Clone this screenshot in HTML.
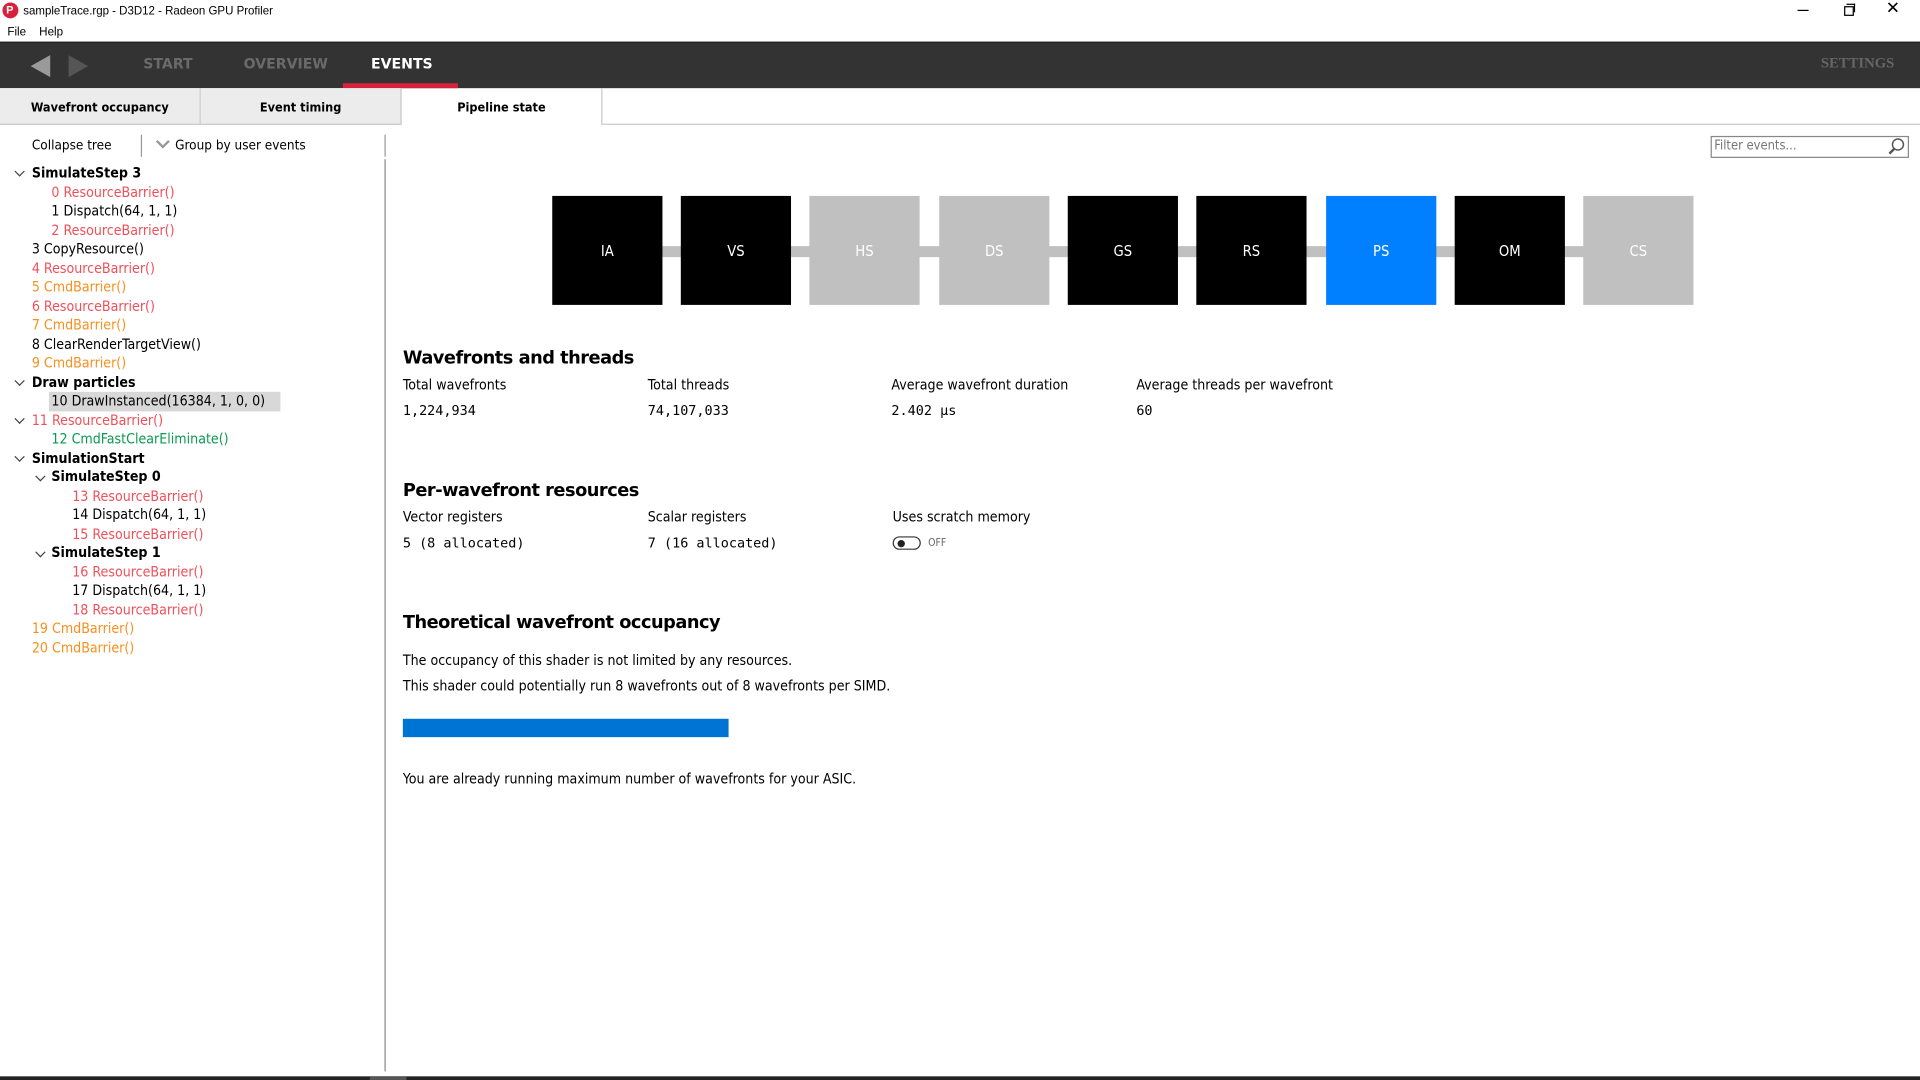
<!DOCTYPE html>
<html><head><meta charset="utf-8">
<style>
html,body{margin:0;padding:0;width:1920px;height:1080px;overflow:hidden;background:#fff}
#w{position:absolute;left:0;top:0;width:1568px;height:882px;transform:scale(1.22449);transform-origin:0 0;font-family:"DejaVu Sans Condensed","Liberation Sans",sans-serif;color:#000}
.a{position:absolute;white-space:nowrap}
.t{font-size:11.5px;line-height:15.5px}
.b{font-weight:bold}
.red{color:#f0505a}.org{color:#f7901e}.grn{color:#0a9a52}
.mono{font-family:"DejaVu Sans Mono","Liberation Mono",monospace;font-size:11px}
.box{position:absolute;top:160px;width:90px;height:89px;color:#fff;font-size:12px;display:flex;align-items:center;justify-content:center}
.h{font-family:"DejaVu Sans","Liberation Sans",sans-serif;font-weight:bold;font-size:14.5px;letter-spacing:-0.4px}
.chev{position:absolute;width:5px;height:5px;border-right:1.5px solid #444;border-bottom:1.5px solid #444;transform:rotate(45deg)}
#tr{position:absolute;left:0;top:1px;width:320px;height:600px}
</style></head><body><div id="w">
<div class="a" style="left:2px;top:2px;width:13px;height:13px;border-radius:50%;background:#d8213a"></div>
<div class="a" style="left:5px;top:3px;color:#fff;font-size:9px;font-weight:bold;font-family:'Liberation Sans',sans-serif">P</div>
<div class="a" style="left:19px;top:3px;font-size:9.4px;font-family:'Liberation Sans',sans-serif">sampleTrace.rgp - D3D12 - Radeon GPU Profiler</div>
<div class="a" style="left:6px;top:21px;font-size:9.5px;font-family:'Liberation Sans',sans-serif">File</div>
<div class="a" style="left:32px;top:21px;font-size:9.5px;font-family:'Liberation Sans',sans-serif">Help</div>
<div class="a" style="left:1468px;top:8px;width:9px;height:1px;background:#000"></div>
<div class="a" style="left:1506px;top:5px;width:6px;height:6px;border:1px solid #000"></div>
<div class="a" style="left:1508px;top:3px;width:6px;height:6px;border-top:1px solid #000;border-right:1px solid #000"></div>
<div class="a" style="left:1540px;top:-2px;font-size:14px;font-family:'Liberation Sans',sans-serif">✕</div>
<div class="a" style="left:0;top:34px;width:1568px;height:1px;background:#000"></div>
<div class="a" style="left:0;top:35px;width:1568px;height:37px;background:#333"></div>
<svg class="a" style="left:22px;top:44px" width="52" height="20"><polygon points="19,1 19,19 3,10" fill="#9a9a9a"/><polygon points="34,1 34,19 50,10" fill="#555"/></svg>
<div class="a b" style="left:117px;top:45px;font-size:11.5px;color:#6a6a6a;font-family:'DejaVu Sans',sans-serif">START</div>
<div class="a b" style="left:199px;top:45px;font-size:11.5px;color:#6a6a6a;font-family:'DejaVu Sans',sans-serif">OVERVIEW</div>
<div class="a b" style="left:303px;top:45px;font-size:11.5px;color:#fff;font-family:'DejaVu Sans',sans-serif">EVENTS</div>
<div class="a" style="left:280px;top:68px;width:94px;height:4px;background:#d8213a"></div>
<div class="a b" style="left:1487px;top:44px;font-size:12px;color:#666;font-family:'Liberation Serif',serif">SETTINGS</div>
<div class="a" style="left:0;top:72px;width:163px;height:29px;background:#ececec;border-right:1px solid #c8c8c8;border-bottom:1px solid #c8c8c8"></div>
<div class="a" style="left:164px;top:72px;width:163px;height:29px;background:#ececec;border-right:1px solid #c8c8c8;border-bottom:1px solid #c8c8c8"></div>
<div class="a" style="left:491px;top:72px;width:1px;height:30px;background:#c8c8c8"></div>
<div class="a" style="left:492px;top:101px;width:1076px;height:1px;background:#c8c8c8"></div>
<div class="a b" style="left:0;width:163px;text-align:center;top:82px;font-size:10.3px">Wavefront occupancy</div>
<div class="a b" style="left:164px;width:163px;text-align:center;top:82px;font-size:10.3px">Event timing</div>
<div class="a b" style="left:328px;width:163px;text-align:center;top:82px;font-size:10.3px">Pipeline state</div>
<div class="a" style="left:26px;top:112px;font-size:11px">Collapse tree</div>
<div class="a" style="left:115px;top:110px;width:1px;height:18px;background:#999"></div>
<svg class="a" style="left:127px;top:114px" width="12" height="8"><polyline points="1,1 6,6 11,1" fill="none" stroke="#999" stroke-width="2"/></svg>
<div class="a" style="left:143px;top:112px;font-size:11px">Group by user events</div>
<div class="a" style="left:314px;top:110px;width:1px;height:18px;background:#999"></div>
<div class="a" style="left:314px;top:130px;width:1px;height:745px;background:#888"></div>
<div id="tr">
<div class="a" style="left:40px;top:319px;width:189px;height:16px;background:#d8d8d8"></div>
<div class="chev" style="left:13px;top:136px"></div>
<div class="chev" style="left:13px;top:307px"></div>
<div class="chev" style="left:13px;top:338px"></div>
<div class="chev" style="left:13px;top:369px"></div>
<div class="chev" style="left:30px;top:385px"></div>
<div class="chev" style="left:30px;top:447px"></div>
<div class="a t b" style="left:26px;top:133px">SimulateStep 3</div>
<div class="a t red" style="left:42px;top:149px">0 ResourceBarrier()</div>
<div class="a t" style="left:42px;top:164px">1 Dispatch(64, 1, 1)</div>
<div class="a t red" style="left:42px;top:180px">2 ResourceBarrier()</div>
<div class="a t" style="left:26px;top:195px">3 CopyResource()</div>
<div class="a t red" style="left:26px;top:211px">4 ResourceBarrier()</div>
<div class="a t org" style="left:26px;top:226px">5 CmdBarrier()</div>
<div class="a t red" style="left:26px;top:242px">6 ResourceBarrier()</div>
<div class="a t org" style="left:26px;top:257px">7 CmdBarrier()</div>
<div class="a t" style="left:26px;top:273px">8 ClearRenderTargetView()</div>
<div class="a t org" style="left:26px;top:288px">9 CmdBarrier()</div>
<div class="a t b" style="left:26px;top:304px">Draw particles</div>
<div class="a t" style="left:42px;top:319px">10 DrawInstanced(16384, 1, 0, 0)</div>
<div class="a t red" style="left:26px;top:335px">11 ResourceBarrier()</div>
<div class="a t grn" style="left:42px;top:350px">12 CmdFastClearEliminate()</div>
<div class="a t b" style="left:26px;top:366px">SimulationStart</div>
<div class="a t b" style="left:42px;top:381px">SimulateStep 0</div>
<div class="a t red" style="left:59px;top:397px">13 ResourceBarrier()</div>
<div class="a t" style="left:59px;top:412px">14 Dispatch(64, 1, 1)</div>
<div class="a t red" style="left:59px;top:428px">15 ResourceBarrier()</div>
<div class="a t b" style="left:42px;top:443px">SimulateStep 1</div>
<div class="a t red" style="left:59px;top:459px">16 ResourceBarrier()</div>
<div class="a t" style="left:59px;top:474px">17 Dispatch(64, 1, 1)</div>
<div class="a t red" style="left:59px;top:490px">18 ResourceBarrier()</div>
<div class="a t org" style="left:26px;top:505px">19 CmdBarrier()</div>
<div class="a t org" style="left:26px;top:521px">20 CmdBarrier()</div>
</div>
<div class="a" style="left:1397px;top:111px;width:160px;height:16px;border:1px solid #888"></div>
<div class="a" style="left:1400px;top:113px;font-size:10.5px;color:#777">Filter events...</div>
<svg class="a" style="left:1541px;top:112px" width="15" height="15"><circle cx="9" cy="6" r="4.5" fill="none" stroke="#555" stroke-width="1.2"/><line x1="6" y1="9.5" x2="2" y2="13.5" stroke="#555" stroke-width="2"/></svg>
<div class="a" style="left:500px;top:201px;width:840px;height:9px;background:#c0c0c0"></div>
<div class="box" style="left:451px;background:#000">IA</div>
<div class="box" style="left:556px;background:#000">VS</div>
<div class="box" style="left:661px;background:#c0c0c0">HS</div>
<div class="box" style="left:767px;background:#c0c0c0">DS</div>
<div class="box" style="left:872px;background:#000">GS</div>
<div class="box" style="left:977px;background:#000">RS</div>
<div class="box" style="left:1083px;background:#0080ff">PS</div>
<div class="box" style="left:1188px;background:#000">OM</div>
<div class="box" style="left:1293px;background:#c0c0c0">CS</div>
<div class="a h" style="left:329px;top:285px">Wavefronts and threads</div>
<div class="a" style="left:329px;top:307px;font-size:11.5px">Total wavefronts</div>
<div class="a" style="left:529px;top:307px;font-size:11.5px">Total threads</div>
<div class="a" style="left:728px;top:307px;font-size:11.5px">Average wavefront duration</div>
<div class="a" style="left:928px;top:307px;font-size:11.5px">Average threads per wavefront</div>
<div class="a mono" style="left:329px;top:329px">1,224,934</div>
<div class="a mono" style="left:529px;top:329px">74,107,033</div>
<div class="a mono" style="left:728px;top:329px">2.402 µs</div>
<div class="a mono" style="left:928px;top:329px">60</div>
<div class="a h" style="left:329px;top:393px">Per-wavefront resources</div>
<div class="a" style="left:329px;top:415px;font-size:11.5px">Vector registers</div>
<div class="a" style="left:529px;top:415px;font-size:11.5px">Scalar registers</div>
<div class="a" style="left:729px;top:415px;font-size:11.5px">Uses scratch memory</div>
<div class="a mono" style="left:329px;top:437px">5 (8 allocated)</div>
<div class="a mono" style="left:529px;top:437px">7 (16 allocated)</div>
<div class="a" style="left:729px;top:438px;width:21px;height:9px;border:1.5px solid #333;border-radius:6px"></div>
<div class="a" style="left:733px;top:441px;width:6px;height:6px;border-radius:50%;background:#222"></div>
<div class="a" style="left:758px;top:439px;font-size:8.5px;color:#666">OFF</div>
<div class="a h" style="left:329px;top:501px">Theoretical wavefront occupancy</div>
<div class="a" style="left:329px;top:532px;font-size:11.5px">The occupancy of this shader is not limited by any resources.</div>
<div class="a" style="left:329px;top:553px;font-size:11.5px">This shader could potentially run 8 wavefronts out of 8 wavefronts per SIMD.</div>
<div class="a" style="left:329px;top:587px;width:266px;height:15px;background:#0074d4"></div>
<div class="a" style="left:329px;top:629px;font-size:11.5px">You are already running maximum number of wavefronts for your ASIC.</div>
<div class="a" style="left:0;top:879px;width:1568px;height:3px;background:#222"></div>
<div class="a" style="left:302px;top:879px;width:30px;height:3px;background:#555"></div>
</div></body></html>
